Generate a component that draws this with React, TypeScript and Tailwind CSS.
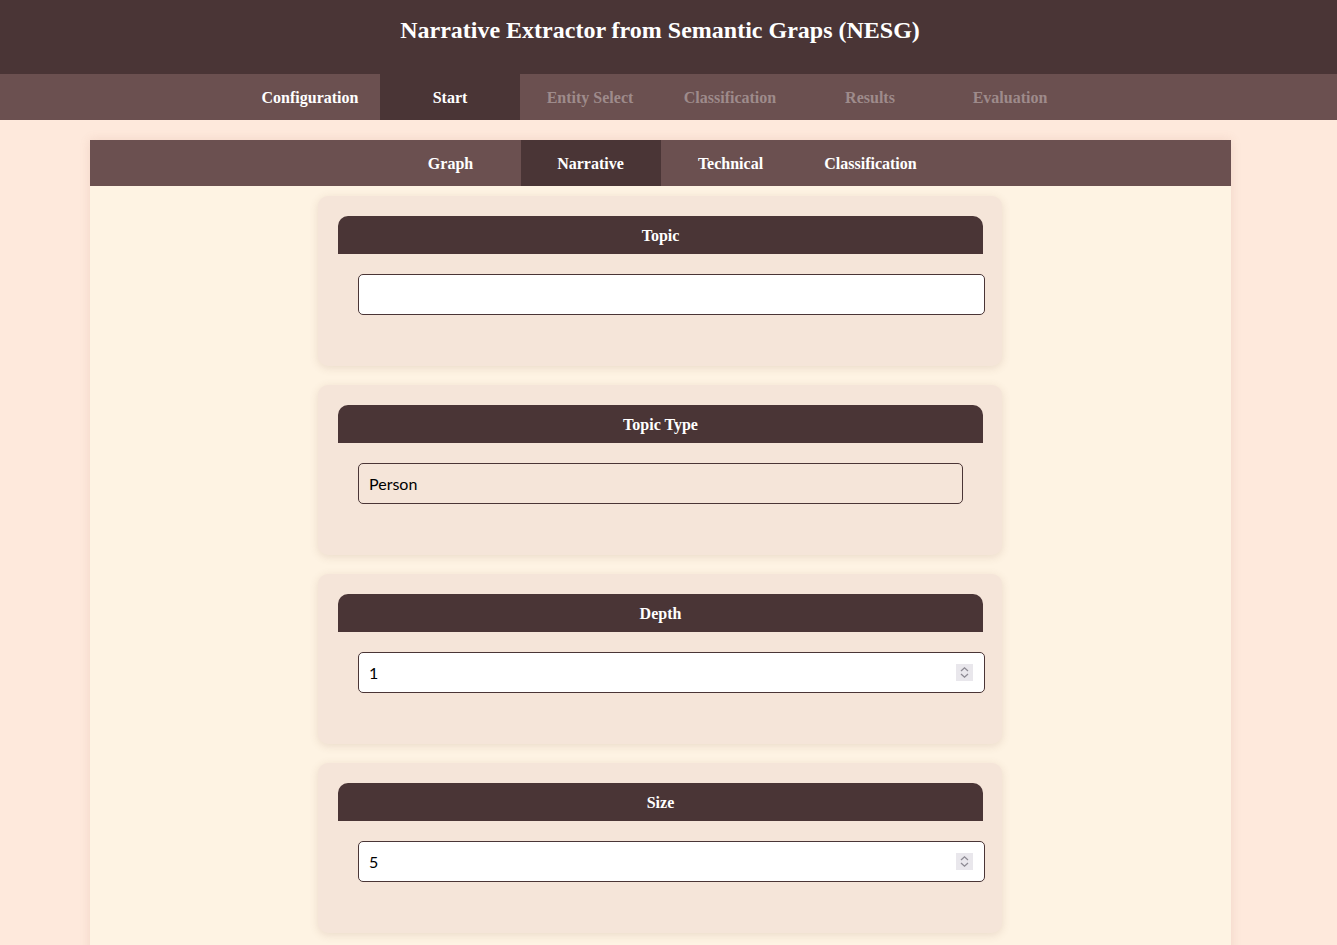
const mainTabs = [
  { label: 'Configuration', state: 'normal' },
  { label: 'Start', state: 'active' },
  { label: 'Entity Select', state: 'disabled' },
  { label: 'Classification', state: 'disabled' },
  { label: 'Results', state: 'disabled' },
  { label: 'Evaluation', state: 'disabled' },
];

const subTabs = [
  { label: 'Graph', active: false },
  { label: 'Narrative', active: true },
  { label: 'Technical', active: false },
  { label: 'Classification', active: false },
];

function Spinner() {
  return (
    <div className="absolute right-[11px] top-[11px] w-[17px] h-[17px] bg-[#e9e7ec] flex items-center justify-center">
      <svg width="11" height="13" viewBox="0 0 11 13" fill="none" stroke="#8d8a93" strokeWidth="1.3">
        <path d="M2 5 L5.5 1.8 L9 5" />
        <path d="M2 8 L5.5 11.2 L9 8" />
      </svg>
    </div>
  );
}

function Card({ title, children }: { title: string; children: React.ReactNode }) {
  return (
    <div className="w-[684px] h-[170px] rounded-[10px] bg-[#f5e5d9] p-5 shadow-[0_2px_8px_rgba(120,80,60,0.15)]">
      <div className="w-[645px] h-[38px] pt-[2px] rounded-t-[10px] bg-[#4a3536] flex items-center justify-center text-white font-bold text-[16px]">
        {title}
      </div>
      <div className="mt-5 ml-5 font-['Lato',sans-serif]">{children}</div>
    </div>
  );
}

export default function App() {
  return (
    <div className="min-h-screen bg-[#fee9dc] font-['Liberation_Serif',serif]">
      <header className="h-[74px] bg-[#4a3536] flex items-center justify-center pr-[17px] pb-[14px]">
        <h1 className="text-white font-bold text-[24px]">Narrative Extractor from Semantic Graps (NESG)</h1>
      </header>
      <nav className="h-[46px] bg-[#6b5050] flex justify-center pr-[17px]">
        {mainTabs.map((tab) => (
          <div
            key={tab.label}
            className={
              'w-[140px] pt-[2px] flex items-center justify-center font-bold text-[16px] ' +
              (tab.state === 'active'
                ? 'bg-[#4a3536] text-white'
                : tab.state === 'disabled'
                ? 'text-[#9e8b8b]'
                : 'text-white')
            }
          >
            {tab.label}
          </div>
        ))}
      </nav>
      <div className="pl-[90px] pr-[106px] pt-5">
        <div className="bg-[#fef3e3] shadow-[0_0_10px_rgba(160,100,80,0.15)] pb-10">
          <div className="h-[46px] bg-[#6b5050] flex justify-center">
            {subTabs.map((tab) => (
              <div
                key={tab.label}
                className={
                  'w-[140px] pt-[2px] flex items-center justify-center font-bold text-[16px] text-white ' +
                  (tab.active ? 'bg-[#4a3536]' : '')
                }
              >
                {tab.label}
              </div>
            ))}
          </div>
          <div className="flex flex-col gap-[19px] pt-[10px] pl-[228px]">
            <Card title="Topic">
              <div className="w-[627px] h-[41px] bg-white border border-[#4a3536] rounded-[5px]" />
            </Card>
            <Card title="Topic Type">
              <div className="w-[605px] h-[41px] border border-[#4a3536] rounded-[5px] flex items-center px-[10px] text-[16px] text-black">
                Person
              </div>
            </Card>
            <Card title="Depth">
              <div className="relative w-[627px] h-[41px] bg-white border border-[#4a3536] rounded-[5px] flex items-center px-[10px] text-[16px] text-black">
                1
                <Spinner />
              </div>
            </Card>
            <Card title="Size">
              <div className="relative w-[627px] h-[41px] bg-white border border-[#4a3536] rounded-[5px] flex items-center px-[10px] text-[16px] text-black">
                5
                <Spinner />
              </div>
            </Card>
          </div>
        </div>
      </div>
    </div>
  );
}
